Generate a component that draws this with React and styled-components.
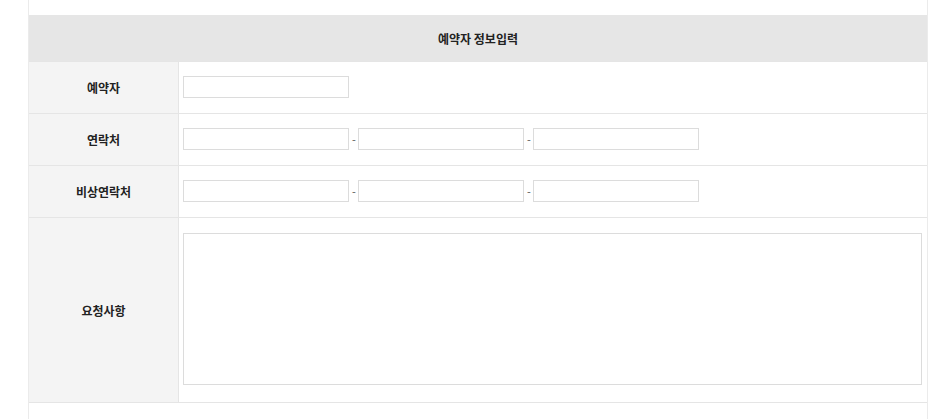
import React from 'react';
import styled, { createGlobalStyle } from 'styled-components';

const GlobalStyle = createGlobalStyle`
  html, body {
    margin: 0;
    padding: 0;
    background: #fff;
  }
  body {
    font-family: "Noto Sans CJK KR", "Noto Sans", sans-serif;
    color: #222;
  }
`;

const rows = [
  { label: '예약자', kind: 'single' },
  { label: '연락처', kind: 'phone' },
  { label: '비상연락처', kind: 'phone' },
  { label: '요청사항', kind: 'memo' },
];

function App() {
  return (
    <>
      <GlobalStyle />
      <Wrapper>
        <Table>
          <Header>예약자 정보입력</Header>
          {rows.map((row) => (
            <Row key={row.label}>
              <Label>{row.label}</Label>
              <Value $memo={row.kind === 'memo'}>
                {row.kind === 'single' && <Input type="text" />}
                {row.kind === 'phone' && (
                  <>
                    <Input type="text" />
                    <Dash>-</Dash>
                    <Input type="text" />
                    <Dash>-</Dash>
                    <Input type="text" />
                  </>
                )}
                {row.kind === 'memo' && <Memo />}
              </Value>
            </Row>
          ))}
        </Table>
      </Wrapper>
    </>
  );
}

export default App;

const Wrapper = styled.div`
  box-sizing: border-box;
  margin-left: 28px;
  width: 900px;
  height: 419px;
  padding-top: 15px;
  border-left: 1px solid #ebebeb;
  border-right: 1px solid #ebebeb;
`;
const Table = styled.div`
  width: 100%;
`;
const Header = styled.div`
  height: 46px;
  background: #e6e6e6;
  display: flex;
  align-items: center;
  justify-content: center;
  font-size: 12px;
  font-weight: bold;
  color: #222;
`;
const Row = styled.div`
  display: grid;
  grid-template-columns: 150px 1fr;
  border-top: 1px solid #e5e5e5;
  &:last-child {
    border-bottom: 1px solid #e5e5e5;
  }
`;
const Label = styled.div`
  box-sizing: border-box;
  background: #f4f4f4;
  border-right: 1px solid #e5e5e5;
  display: flex;
  align-items: center;
  justify-content: center;
  font-size: 12px;
  font-weight: bold;
  color: #222;
`;
const Value = styled.div`
  display: flex;
  align-items: center;
  gap: 3px;
  padding: ${(p) => (p.$memo ? '15px 5px 17px 4px' : '14px 4px 15px')};
  min-height: 22px;
`;
const Input = styled.input`
  box-sizing: border-box;
  width: 166px;
  height: 22px;
  margin: 0;
  padding: 0 4px;
  border: 1px solid #dcdcdc;
  background: #fff;
  outline: none;
`;
const Dash = styled.span`
  font-size: 11px;
  color: #555;
  width: 3px;
  text-align: center;
`;
const Memo = styled.textarea`
  box-sizing: border-box;
  width: 100%;
  height: 152px;
  margin: 0;
  padding: 4px;
  border: 1px solid #dcdcdc;
  resize: none;
  outline: none;
  display: block;
`;
